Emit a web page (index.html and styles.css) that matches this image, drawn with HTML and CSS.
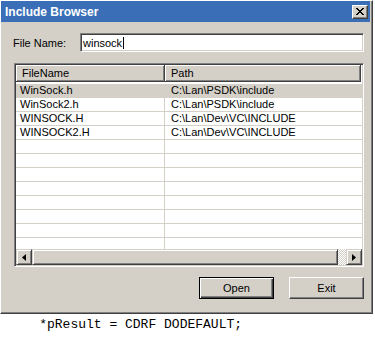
FILE: index.html
```html
<!DOCTYPE html>
<html lang="en">
<head>
    <meta charset="UTF-8">
    <meta name="viewport" content="width=device-width, initial-scale=1.0">
    <title>Include Browser</title>
    <link rel="stylesheet" href="styles.css">
</head>
<body>
    <div class="window">
        <div class="titlebar">
            <span class="title">Include Browser</span>
            <button class="close-btn" title="Close">
                <svg width="8" height="7" viewBox="0 0 8 7">
                    <path d="M0 0h2v1h1v1h2v-1h1v-1h2v1h-1v1h-1v1h-1v1h1v1h1v1h1v1h-2v-1h-1v-1h-2v1h-1v1h-2v-1h1v-1h1v-1h1v-1h-1v-1h-1v-1h-1z" fill="#000"/>
                </svg>
            </button>
        </div>

        <div class="content">
            <div class="field-row">
                <label for="filename">File Name:</label>
                <div class="textbox"><span id="filename">winsock</span><span class="caret"></span></div>
            </div>

            <div class="listview">
                <div class="lv-header">
                    <div class="lv-col col-name">FileName</div>
                    <div class="lv-col col-path">Path</div>
                </div>
                <div class="lv-body">
                    <div class="lv-row selected"><div class="cell col-name">WinSock.h</div><div class="cell col-path">C:\Lan\PSDK\include</div></div>
                    <div class="lv-row"><div class="cell col-name">WinSock2.h</div><div class="cell col-path">C:\Lan\PSDK\include</div></div>
                    <div class="lv-row"><div class="cell col-name">WINSOCK.H</div><div class="cell col-path">C:\Lan\Dev\VC\INCLUDE</div></div>
                    <div class="lv-row"><div class="cell col-name">WINSOCK2.H</div><div class="cell col-path">C:\Lan\Dev\VC\INCLUDE</div></div>
                    <div class="lv-row"><div class="cell col-name"></div><div class="cell col-path"></div></div>
                    <div class="lv-row"><div class="cell col-name"></div><div class="cell col-path"></div></div>
                    <div class="lv-row"><div class="cell col-name"></div><div class="cell col-path"></div></div>
                    <div class="lv-row"><div class="cell col-name"></div><div class="cell col-path"></div></div>
                    <div class="lv-row"><div class="cell col-name"></div><div class="cell col-path"></div></div>
                    <div class="lv-row"><div class="cell col-name"></div><div class="cell col-path"></div></div>
                    <div class="lv-row"><div class="cell col-name"></div><div class="cell col-path"></div></div>
                    <div class="lv-row"><div class="cell col-name"></div><div class="cell col-path"></div></div>
                </div>
                <div class="hscroll">
                    <div class="sb-btn">
                        <svg width="4" height="7" viewBox="0 0 4 7"><path d="M4 0v7L0 3.5z" fill="#000"/></svg>
                    </div>
                    <div class="sb-thumb"></div>
                    <div class="sb-track"></div>
                    <div class="sb-btn">
                        <svg width="4" height="7" viewBox="0 0 4 7"><path d="M0 0v7l4-3.5z" fill="#000"/></svg>
                    </div>
                </div>
            </div>

            <div class="button-row">
                <button class="btn default">Open</button>
                <button class="btn">Exit</button>
            </div>
        </div>
    </div>

    <pre class="code">    *pResult = CDRF DODEFAULT;</pre>
</body>
</html>
```

FILE: styles.css
```css
body {
    margin: 0;
    background: #fff;
    font-family: "Liberation Sans", Arial, sans-serif;
    font-size: 11px;
    color: #000;
}
.window {
    width: 373px;
    height: 314px;
    box-sizing: border-box;
    background: #d4d0c8;
    border: 1px solid;
    border-color: #fff #404040 #404040 #fff;
    box-shadow: inset -1px -1px #808080;
    padding: 0 2px 2px 0;
}
.titlebar {
    height: 21px;
    background: #3a6fb8;
    display: flex;
    align-items: center;
    justify-content: space-between;
    padding: 0 2px 0 4px;
}
.title {
    color: #fff;
    font-weight: bold;
    font-size: 12px;
}
.close-btn {
    width: 16px;
    height: 14px;
    padding: 0;
    background: #d4d0c8;
    border: 1px solid;
    border-color: #fff #404040 #404040 #fff;
    box-shadow: inset -1px -1px #808080;
    display: flex;
    align-items: center;
    justify-content: center;
}
.content {
    padding: 11px 6px 0 12px;
}
.field-row {
    display: flex;
    align-items: center;
}
.field-row label {
    width: 67px;
}
.textbox {
    flex: 1;
    height: 19px;
    box-sizing: border-box;
    background: #fff;
    border: 1px solid;
    border-color: #808080 #fff #fff #808080;
    box-shadow: inset 1px 1px #404040, inset -1px -1px #d4d0c8;
    display: flex;
    align-items: center;
    padding-left: 2px;
    font-size: 11px;
}
.caret {
    width: 1px;
    height: 12px;
    background: #000;
    margin-left: 1px;
}
.listview {
    margin: 11px 0 0 1px;
    height: 204px;
    box-sizing: border-box;
    background: #fff;
    border: 1px solid;
    border-color: #808080 #fff #fff #808080;
    box-shadow: inset 1px 1px #404040, inset -1px -1px #d4d0c8;
    padding: 1px;
    display: flex;
    flex-direction: column;
}
.lv-header {
    display: flex;
    height: 17px;
    flex-shrink: 0;
    margin-bottom: 2px;
}
.lv-col {
    box-sizing: border-box;
    background: #d4d0c8;
    border-right: 1px solid #404040;
    border-bottom: 1px solid #404040;
    box-shadow: inset 1px 1px #fff, inset -1px -1px #808080;
    padding-left: 6px;
    line-height: 16px;
}
.lv-header .col-name {
    width: 149px;
}
.lv-header .col-path {
    flex: 1;
    margin-right: 1px;
}
.lv-body {
    flex: 1;
    overflow: hidden;
}
.lv-row {
    display: flex;
    height: 14px;
    box-sizing: border-box;
    border-bottom: 1px solid #d4d0c8;
    line-height: 13px;
}
.lv-row.selected {
    background: #d4d0c8;
}
.cell {
    white-space: nowrap;
}
.lv-row .col-name {
    width: 149px;
    box-sizing: border-box;
    border-right: 1px solid #d4d0c8;
    padding-left: 4px;
}
.lv-row .col-path {
    flex: 1;
    padding-left: 6px;
}
.hscroll {
    display: flex;
    height: 16px;
    flex-shrink: 0;
}
.sb-btn, .sb-thumb {
    box-sizing: border-box;
    background: #d4d0c8;
    border: 1px solid;
    border-color: #d4d0c8 #404040 #404040 #d4d0c8;
    box-shadow: inset 1px 1px #fff, inset -1px -1px #808080;
}
.sb-btn {
    width: 16px;
    display: flex;
    align-items: center;
    justify-content: center;
}
.sb-thumb {
    width: 306px;
}
.sb-track {
    flex: 1;
    background: repeating-conic-gradient(#fff 0 25%, #d4d0c8 0 50%) 0 0 / 2px 2px;
}
.button-row {
    display: flex;
    justify-content: flex-end;
    gap: 15px;
    margin-top: 10px;
}
.btn {
    width: 75px;
    height: 22px;
    box-sizing: border-box;
    background: #d4d0c8;
    font-family: "Liberation Sans", Arial, sans-serif;
    font-size: 11px;
    color: #000;
    border: 1px solid;
    border-color: #fff #404040 #404040 #fff;
    box-shadow: inset -1px -1px #808080;
    padding: 0;
}
.btn.default {
    border-color: #000;
    box-shadow: inset 1px 1px #fff, inset -1px -1px #404040, inset -2px -2px #808080;
}
.code {
    margin: 3px 0 0 8px;
    font-family: "Liberation Mono", "Courier New", monospace;
    font-size: 13px;
    line-height: 15px;
}
```
